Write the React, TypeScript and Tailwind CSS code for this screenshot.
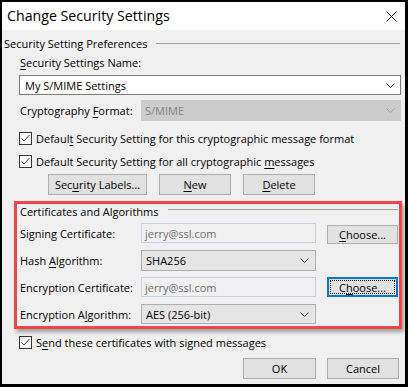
import React from "react";

const U = ({ children }: { children: React.ReactNode }) => (
  <span className="underline underline-offset-[2px] decoration-[1px]">{children}</span>
);

const Chevron = ({ color = "#333" }: { color?: string }) => (
  <svg width="9" height="5" viewBox="0 0 9 5" className="shrink-0">
    <polyline points="0.5,0.5 4.5,4.5 8.5,0.5" fill="none" stroke={color} strokeWidth="1" />
  </svg>
);

const Check = () => (
  <div className="w-[13px] h-[13px] border border-[#333] bg-white flex items-center justify-center shrink-0">
    <svg width="11" height="11" viewBox="0 0 11 11">
      <polyline points="1.5,5.5 4,8 9.5,2" fill="none" stroke="#333" strokeWidth="1" />
    </svg>
  </div>
);

const Btn = ({ w, children, focused = false }: { w: string; children: React.ReactNode; focused?: boolean }) =>
  focused ? (
    <div className={`${w} h-[20px] relative bg-[#e1e1e1] border-2 border-[#0078d7] flex items-center justify-center`}>
      <div className="absolute inset-[1px] border border-dotted border-black" />
      <span className="relative">{children}</span>
    </div>
  ) : (
    <div className={`${w} h-[20px] bg-[#e1e1e1] border border-[#adadad] flex items-center justify-center`}>
      {children}
    </div>
  );

const Combo = ({ w, h, text }: { w: string; h: string; text: string }) => (
  <div className={`${w} ${h} bg-[#e5e5e5] border border-[#adadad] flex items-center justify-between pl-[4px] pr-[6px]`}>
    <span>{text}</span>
    <Chevron />
  </div>
);

const ReadOnly = ({ text }: { text: string }) => (
  <div className="w-[175px] h-[20px] bg-[#f0f0f0] border border-[#c3d2e2] flex items-center pl-[3px] text-[#6d6d6d]">
    {text}
  </div>
);

export default function App() {
  return (
    <div className="w-[408px] h-[387px] box-border border-black border-l-2 border-t-2 border-r-[3px] border-b-[3px] bg-[#f0f0f0] flex flex-col font-['Open_Sans',sans-serif] text-[11px] text-black leading-none">
      <div className="h-[28px] bg-white flex items-center justify-between pl-[5px] pr-[8px] shrink-0">
        <span className="text-[14.2px]">Change Security Settings</span>
        <svg width="11" height="11" viewBox="0 0 11 11">
          <line x1="0.5" y1="0.5" x2="10.5" y2="10.5" stroke="#000" strokeWidth="1" />
          <line x1="10.5" y1="0.5" x2="0.5" y2="10.5" stroke="#000" strokeWidth="1" />
        </svg>
      </div>

      <div className="mt-[5px] h-[16px] flex items-center pl-[2px] pr-[5px] shrink-0">
        <span>Security Setting Preferences</span>
        <div className="flex-1 h-px bg-[#a0a0a0] ml-[9px]" />
      </div>

      <div className="mt-[4px] h-[14px] flex items-center pl-[18px] shrink-0">
        <span>
          <U>S</U>ecurity Settings Name:
        </span>
      </div>

      <div className="mt-[6px] ml-[17px] w-[382px] h-[20px] bg-white border border-[#7a7a7a] flex items-center justify-between pl-[5px] pr-[5px] shrink-0">
        <span>My S/MIME Settings</span>
        <Chevron />
      </div>

      <div className="mt-[5px] h-[21px] flex items-center pl-[18px] shrink-0">
        <span className="w-[121px]">
          Cryptography <U>F</U>ormat:
        </span>
        <div className="w-[260px] h-[21px] bg-[#cccccc] flex items-center justify-between pl-[4px] pr-[6px] text-[#838383]">
          <span>S/MIME</span>
          <Chevron color="#a0a0a0" />
        </div>
      </div>

      <div className="mt-[11px] h-[13px] flex items-center pl-[17px] gap-[4px] shrink-0">
        <Check />
        <span>
          Defaul<U>t</U> Security Setting for this cryptographic message format
        </span>
      </div>

      <div className="mt-[10px] h-[13px] flex items-center pl-[17px] gap-[4px] shrink-0">
        <Check />
        <span>
          Default Security Setting for all cryptographic <U>m</U>essages
        </span>
      </div>

      <div className="mt-[6px] h-[21px] flex items-center pl-[46px] gap-[12px] shrink-0">
        <Btn w="w-[99px] !h-[21px]">
          Sec<U>u</U>rity Labels...
        </Btn>
        <Btn w="w-[72px] !h-[21px]">
          <U>N</U>ew
        </Btn>
        <Btn w="w-[72px] !h-[21px]">
          <U>D</U>elete
        </Btn>
      </div>

      <div className="mt-[6px] ml-[12px] w-[388px] h-[128px] box-border border-[3px] border-[#f2454a] shadow-[2px_3px_4px_rgba(0,0,0,0.35)] flex flex-col shrink-0">
        <div className="h-[14px] flex items-center pl-[3px] pr-[1px]">
          <span>Certificates and Algorithms</span>
          <div className="flex-1 h-px bg-[#a0a0a0] ml-[9px] -mt-[3px]" />
        </div>

        <div className="mt-[5px] h-[20px] flex items-center pl-[3px]">
          <span className="w-[121px]">Signing Certificate:</span>
          <ReadOnly text="jerry@ssl.com" />
          <div className="ml-[11px] mt-[3px]">
            <Btn w="w-[71px] !h-[19px]">
              <U>C</U>hoose...
            </Btn>
          </div>
        </div>

        <div className="mt-[7px] h-[21px] flex items-center pl-[3px]">
          <span className="w-[121px]">
            Hash <U>A</U>lgorithm:
          </span>
          <Combo w="w-[175px]" h="h-[21px]" text="SHA256" />
        </div>

        <div className="mt-[6px] h-[20px] flex items-center pl-[3px]">
          <span className="w-[121px]">Encryption Certificate:</span>
          <ReadOnly text="jerry@ssl.com" />
          <div className="ml-[11px]">
            <Btn w="w-[71px]" focused>
              C<U>h</U>oose...
            </Btn>
          </div>
        </div>

        <div className="mt-[7px] h-[20px] flex items-center pl-[3px]">
          <span className="w-[121px]">
            Encryption A<U>l</U>gorithm:
          </span>
          <Combo w="w-[175px]" h="h-[20px]" text="AES (256-bit)" />
        </div>
      </div>

      <div className="mt-[7px] h-[13px] flex items-center pl-[17px] gap-[4px] shrink-0">
        <Check />
        <span>
          S<U>e</U>nd these certificates with signed messages
        </span>
      </div>

      <div className="mt-[9px] h-[21px] flex items-center justify-end pr-[6px] gap-[11px] shrink-0">
        <Btn w="w-[73px] !h-[21px]">OK</Btn>
        <Btn w="w-[72px] !h-[21px]">Cancel</Btn>
      </div>
    </div>
  );
}
